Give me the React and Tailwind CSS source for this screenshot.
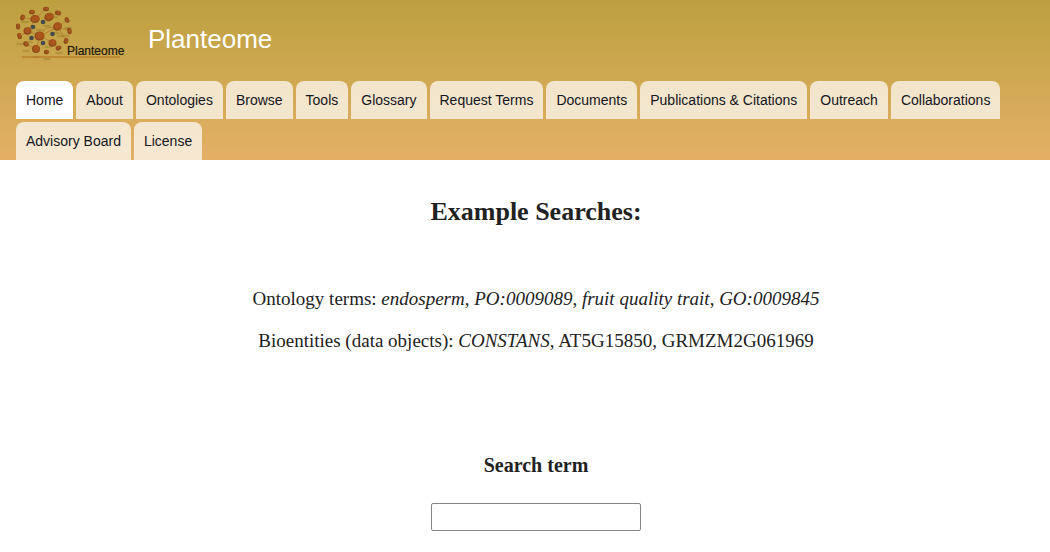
const tabs = [
  'Home', 'About', 'Ontologies', 'Browse', 'Tools', 'Glossary', 'Request Terms', 'Documents',
  'Publications & Citations', 'Outreach', 'Collaborations', 'Advisory Board', 'License',
];

// cx, cy, rx, ry, rotation
const cells = [
  [46, 9, 3, 2.2, 0], [32, 12, 3, 2.3, -10], [22.5, 17.5, 2.3, 3, 20], [18, 26.5, 2.2, 3, 0],
  [19.5, 36, 2.3, 3.2, -15], [26, 44, 3, 2.4, 35], [46.5, 52, 2.6, 2.3, 0], [58.5, 48, 3, 2.2, -30],
  [66, 41, 2.3, 3, 20], [69.5, 31, 2.2, 3.2, -10], [67, 20, 2.2, 3, -30], [58, 13, 3.2, 2.3, 15],
  [35, 19, 4.8, 4, -10], [49, 17, 4.8, 4, -25], [57.5, 26.5, 4.5, 4.2, -25], [27.5, 31, 4, 3.8, 0],
  [39.5, 36, 5, 4.5, 0], [52.5, 43, 4, 3.8, 0], [36, 49, 4, 4, 0],
];

const seeds = [[43, 22], [33, 27], [31.5, 38], [52.5, 34], [43, 43]];

const shadows = [
  [54, 17], [47, 26], [56, 33], [68, 28], [61, 36], [20, 44], [26, 51], [36, 57],
  [47, 59], [29, 42], [48, 47], [25, 22], [40, 30], [66, 36], [59, 53],
];

function Logo() {
  return (
    <svg viewBox="0 0 112 56" className="h-14 w-28" role="img" aria-label="Planteome logo">
      <g transform="translate(-16 -5)">
        <g fill="#695616" opacity="0.22">
          {shadows.map(([x, y]) => (
            <ellipse key={`${x}-${y}`} cx={x} cy={y} rx="4" ry="1.2" />
          ))}
        </g>
        <path
          d="M40 36L46 28L58 27L67 20M40 36L28 31M40 36L58 27L66 41M40 36L36 49M40 36L53 43M35 19L46 9M35 19L23 18M35 19L32 12M49 17L58 13M58 27L70 31M28 31L35 19M28 31L20 36M36 49L26 44M53 43L59 48"
          fill="none"
          stroke="#a9641d"
          strokeWidth="0.8"
          opacity="0.65"
        />
        <path d="M22 57H120" stroke="#bd7925" strokeWidth="1.4" opacity="0.8" />
        {cells.map(([x, y, rx, ry, turn]) => (
          <g key={`${x}-${y}`} transform={`rotate(${turn} ${x} ${y})`}>
            <ellipse cx={x} cy={y} rx={rx} ry={ry} fill="#8c4a1b" />
            <ellipse cx={x + 0.4} cy={y - 0.4} rx={rx - 0.9} ry={ry - 0.9} fill="#a9551c" />
          </g>
        ))}
        {seeds.map(([x, y]) => (
          <circle key={`${x}-${y}`} cx={x} cy={y} r="2.3" fill="#454a4c" />
        ))}
        <text x="67" y="55" fontSize="12" fontFamily="Liberation Sans, Arial, sans-serif" fill="#1c190b" stroke="#1c190b" strokeWidth="0.2">
          Planteome
        </text>
      </g>
    </svg>
  );
}

export default function App() {
  return (
    <div className="min-h-screen bg-white font-['Georgia','Liberation_Serif',serif] text-[#222]">
      <header className="bg-linear-to-b from-[#bca03e] to-[#e4b066] px-4 pt-[5px] font-['Helvetica_Neue','Liberation_Sans',Arial,sans-serif]">
        <div className="flex h-[76px] items-start gap-5">
          <a href="#home"><Logo /></a>
          <h1 className="pt-[14px] text-[26px] leading-10 text-white">
            <a href="#home">Planteome</a>
          </h1>
        </div>

        <nav>
          <ul className="flex flex-wrap gap-[3px]">
            {tabs.map((tab, i) => (
              <li key={tab}>
                <a
                  href="#home"
                  aria-current={i === 0 ? 'page' : undefined}
                  className={`block rounded-t-lg px-[10px] text-sm leading-[38px] text-[#15151c] ${i === 0 ? 'bg-white' : 'bg-white/70'}`}
                >
                  {tab}
                </a>
              </li>
            ))}
          </ul>
        </nav>
      </header>

      <main className="pt-[34px] pl-[22px] text-center">
        <h2 className="text-[26px] leading-9 font-bold">Example Searches:</h2>

        <div className="space-y-[14px] pt-[55px] text-[19px] leading-7">
          <p>
            Ontology terms: <em>endosperm</em>, <em>PO:0009089</em>, <em>fruit quality trait</em>, <em>GO:0009845</em>
          </p>
          <p>
            Bioentities (data objects): <em>CONSTANS</em>, AT5G15850, GRMZM2G061969
          </p>
        </div>

        <form className="flex flex-col items-center gap-6 pt-24" onSubmit={(e) => e.preventDefault()}>
          <label htmlFor="search-term" className="text-xl leading-7 font-bold">Search term</label>
          <input
            id="search-term"
            type="text"
            className="h-7 w-[210px] rounded-xs border border-[#858585] bg-white px-2 text-base"
          />
        </form>
      </main>
    </div>
  );
}
